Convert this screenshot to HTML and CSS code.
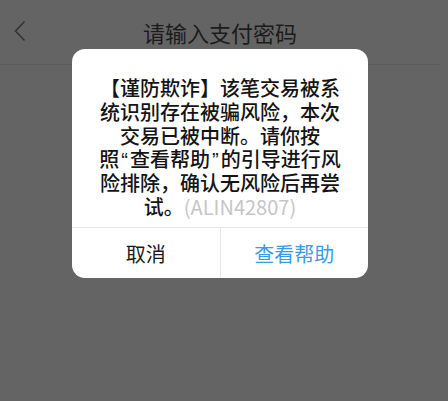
FILE: index.html
```html
<!DOCTYPE html>
<html lang="zh-CN">
<head>
<meta charset="utf-8">
<link rel="stylesheet" href="styles.css">
</head>
<body>
<div class="app">
  <header class="navbar">
    <svg class="back" width="12" height="22" viewBox="0 0 12 22"><path d="M10.5 1.5 L1.5 11 L10.5 20.5" fill="none" stroke="#333" stroke-width="1.6"/></svg>
    <h1 class="title">请输入支付密码</h1>
  </header>
  <main class="content"></main>
  <div class="dialog">
    <div class="message">
      <div class="line">【谨防欺诈】该笔交易被系</div>
      <div class="line">统识别存在被骗风险，本次</div>
      <div class="line">交易已被中断。请你按</div>
      <div class="line">照<span class="q">“</span>查看帮助<span class="q">”</span>的引导进行风</div>
      <div class="line">险排除，确认无风险后再尝</div>
      <div class="line">试。<span class="code">(ALIN42807)</span></div>
    </div>
    <div class="actions">
      <div class="btn cancel">取消</div>
      <div class="btn help">查看帮助</div>
    </div>
  </div>
</div>
</body>
</html>
```
FILE: styles.css
```css
html, body {
  margin: 0;
  padding: 0;
  background: #646464;
  height: 100%;
}
body {
  font-family: "Noto Sans CJK SC", "Noto Sans", sans-serif;
}
.app {
  position: relative;
  width: 440px;
  height: 401px;
}
.navbar {
  position: relative;
  height: 64px;
  border-bottom: 1px solid #5c5c5c;
  display: flex;
  align-items: center;
  justify-content: center;
}
.back {
  position: absolute;
  left: 14px;
  top: 20px;
}
.title {
  margin: 0;
  font-size: 22px;
  font-weight: 400;
  color: #1c1c1c;
  line-height: 1;
}
.dialog {
  position: absolute;
  left: 72px;
  top: 49px;
  width: 296px;
  height: 229px;
  background: #fff;
  border-radius: 13px;
  display: flex;
  flex-direction: column;
  overflow: hidden;
}
.message {
  flex: 1;
  padding: 27px 10px 0;
  font-size: 20px;
  font-weight: 500;
  color: #141414;
  text-align: center;
  white-space: nowrap;
}
.line {
  height: 23.8px;
  line-height: 23.8px;
}
.q {
  font-family: "Liberation Sans", sans-serif;
  margin: 0 2px;
}
.code {
  color: #c6c6c6;
  font-weight: 400;
}
.actions {
  height: 50px;
  border-top: 1px solid #e6e6e6;
  display: flex;
}
.btn {
  flex: 1;
  display: flex;
  align-items: center;
  justify-content: center;
  font-size: 20px;
}
.cancel {
  color: #1a1a1a;
  border-right: 1px solid #e6e6e6;
}
.help {
  color: #3a9ae6;
}
```
